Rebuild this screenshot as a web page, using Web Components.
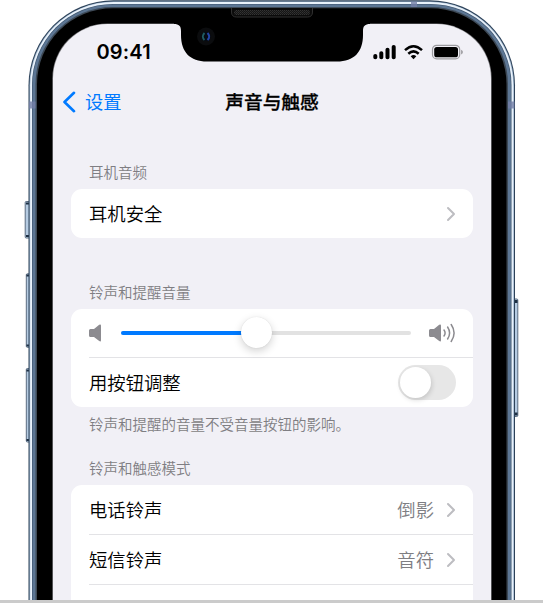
<!DOCTYPE html>
<html lang="zh-CN">
<head>
<meta charset="utf-8">
<title>声音与触感</title>
<style>
    body {
        margin: 0;
        width: 545px;
        height: 604px;
        overflow: hidden;
        background: #fff;
        font-family: "Liberation Sans", "Noto Sans CJK SC", sans-serif;
        font-weight: 350;
    }
</style>
</head>
<body>
<phone-frame>
    <status-bar>09:41</status-bar>
    <nav-bar>
        <span slot="back">设置</span>
        声音与触感
    </nav-bar>
    <settings-group style="margin-top: 40px">
        <span slot="header">耳机音频</span>
        <settings-row chevron>耳机安全</settings-row>
    </settings-group>
    <settings-group style="margin-top: 45px">
        <span slot="header">铃声和提醒音量</span>
        <volume-slider value="46.7"></volume-slider>
        <settings-row>用按钮调整<toggle-switch slot="value"></toggle-switch></settings-row>
        <span slot="footer">铃声和提醒的音量不受音量按钮的影响。</span>
    </settings-group>
    <settings-group style="margin-top: 24px">
        <span slot="header">铃声和触感模式</span>
        <settings-row chevron>电话铃声<span slot="value">倒影</span></settings-row>
        <settings-row chevron>短信铃声<span slot="value">音符</span></settings-row>
        <settings-row></settings-row>
    </settings-group>
</phone-frame>

<script>
class PhoneFrame extends HTMLElement {
    constructor() {
        super()
        this.attachShadow({ mode: "open" })
        this.shadowRoot.innerHTML = /*html*/ `
            <style>
                :host {
                    display: block;
                    position: relative;
                    box-sizing: border-box;
                    width: 543px;
                    height: 603px;
                    padding: 24px 52px 0 53px;
                    border-bottom: 3px solid #cbcbcb;
                    overflow: hidden;
                }

                #body {
                    position: absolute;
                    left: 0;
                    top: 0;
                }

                #screen {
                    position: relative;
                    display: flex;
                    flex-direction: column;
                    width: 438px;
                    height: 576px;
                    overflow: hidden;
                }
            </style>

            <svg id="body" width="543" height="600" viewBox="0 0 543 600">
                <defs>
                    <pattern id="mesh" width="2" height="2" patternUnits="userSpaceOnUse">
                        <rect width="2" height="2" fill="#151515"/>
                        <rect width="1" height="1" fill="#343434"/>
                        <rect x="1" y="1" width="1" height="1" fill="#2b2b2b"/>
                    </pattern>
                </defs>

                <!-- side keys -->
                <g fill="#b5cbe2" stroke="#5b6c80" stroke-width="1">
                    <rect x="25.200" y="201.500" width="5" height="36.500" rx="1"/>
                    <rect x="26.300" y="273.800" width="4" height="73.500" rx="1"/>
                    <rect x="26.300" y="368.500" width="4" height="73.500" rx="1"/>
                    <rect x="513.500" y="299" width="4.300" height="117.500" rx="1"/>
                </g>
                <path fill="#1d2f43" d="M26 202.500h3v2h-3zM26 235h3v2h-3zM26.500 274.500h2.500v2h-2.500zM26.500 344.500h2.500v2h-2.500zM26.500 369.500h2.500v2h-2.500zM26.500 439h2.500v2h-2.500zM515 300h2.500v3h-2.500zM515 412.500h2.500v3h-2.500z"/>

                <!-- metal band, from the outer edge inwards -->
                <rect x="28.500" y=".3" width="486.500" height="700" rx="85" fill="#2d4259"/>
                <rect x="29.500" y="1.500" width="484.500" height="700" rx="84" fill="#9db4cc"/>
                <rect x="30.200" y="2" width="483.100" height="700" rx="83.500" fill="#e9f2fb"/>
                <rect x="32" y="3.900" width="479.500" height="700" rx="81" fill="#3f556e"/>
                <rect x="32.600" y="4.500" width="478.300" height="700" rx="80.500" fill="#5c7694"/>
                <rect x="35.500" y="7" width="472.500" height="700" rx="77" fill="#3e4a57"/>
                <rect x="37" y="8.300" width="469.500" height="700" rx="76" fill="#000"/>
                <path d="M29 101.500h6.500v7h-6.500zM508 101.500h6.500v7h-6.500zM411 1.500h6v5.500h-6z" fill="#747fa8" opacity=".8"/>

                <!-- screen -->
                <rect x="52.300" y="23.500" width="439.400" height="700" rx="55" fill="#76767a"/>
                <rect x="53" y="24" width="438" height="700" rx="54.500" fill="#f1f0f6"/>

                <!-- notch -->
                <path d="M174 22V24C179 24 181 26 181 31V35C181 52 190 61.500 207 61.500H337C354 61.500 363 52 363 35V31C363 26 365 24 370 24V22Z"/>
                <path d="M231.500 8V12Q231.500 17 236.500 17H307.500Q312.500 17 312.500 12V8" fill="#0b0b0b" stroke="#303030"/>
                <rect x="234" y="10" width="76" height="5" rx="2.500" fill="url(#mesh)"/>
                <circle cx="206" cy="36.500" r="9" fill="#0b0c0e"/>
                <circle cx="206" cy="36.500" r="4.500" fill="#050a13"/>
                <path d="M204.500 33Q201 36.500 204.500 40" fill="none" stroke="#205d62" stroke-width="1.800"/>
                <path d="M207.500 33Q211 36.500 207.500 40" fill="none" stroke="#2445a5" stroke-width="2"/>
            </svg>
            <div id="screen"><slot></slot></div>
        `
    }
}

class StatusBar extends HTMLElement {
    constructor() {
        super()
        this.attachShadow({ mode: "open" })
        this.shadowRoot.innerHTML = /*html*/ `
            <style>
                :host {
                    display: flex;
                    justify-content: space-between;
                    align-items: center;
                    height: 38px;
                    padding: 9px 27px 0 43.500px;
                    font: 600 20px/38px Inter, sans-serif;
                    letter-spacing: .15px;
                }

                svg {
                    display: block;
                }
            </style>
            <span><slot></slot></span>
            <svg width="92" height="20" viewBox="372 42 92 20">
                <path d="M373.300 55.800q0-1.800 2-1.800t2 1.800v1.700q0 1.800-2 1.800t-2-1.800zM379.300 53q0-1.800 2-1.800t2 1.800v4.500q0 1.800-2 1.800t-2-1.800zM385.500 49.600q0-1.800 2-1.800t2 1.800v7.900q0 1.800-2 1.800t-2-1.800zM391.700 46.700q0-1.800 2-1.800t2 1.800v10.800q0 1.800-2 1.800t-2-1.800z"/>
                <g fill="none" stroke="#000" stroke-width="2.500">
                    <path d="M405 50.200Q413.500 42.400 422 50.200"/>
                    <path d="M408.300 53.700Q413.500 49.100 418.700 53.700"/>
                </g>
                <path d="M410.700 56.200Q413.500 53.900 416.300 56.200L413.500 59.200Z"/>
                <rect x="432.500" y="45.300" width="27.200" height="13.600" rx="4.200" fill="none" stroke="#9c9b9f" stroke-width="1.200"/>
                <rect x="434.200" y="47" width="23.800" height="10.300" rx="2.600"/>
                <path d="M461 49.800Q463 50.400 463 52.100T461 54.400Z" fill="#a5a4a8"/>
            </svg>
        `
    }
}

class NavBar extends HTMLElement {
    constructor() {
        super()
        this.attachShadow({ mode: "open" })
        this.shadowRoot.innerHTML = /*html*/ `
            <style>
                :host {
                    display: grid;
                    grid-template-columns: 1fr auto 1fr;
                    align-items: center;
                    height: 40px;
                    margin-top: 12px;
                    padding: 0 9px;
                    font-size: 18.700px;
                    font-weight: 500;
                    line-height: 40px;
                }

                #title {
                    -webkit-text-stroke: .3px currentColor;
                }

                #back {
                    display: flex;
                    align-items: center;
                    gap: 8px;
                    color: #007aff;
                    font-size: 18.300px;
                    font-weight: 400;
                }

                svg {
                    margin-top: -2px;
                }
            </style>
            <div id="back">
                <svg width="15" height="22" viewBox="0 0 15 22" fill="none" stroke="currentColor" stroke-width="2.600" stroke-linecap="round" stroke-linejoin="round">
                    <path d="M12 1.800L2.500 11L12 20.200"/>
                </svg>
                <slot name="back"></slot>
            </div>
            <div id="title"><slot></slot></div>
        `
    }
}

class SettingsGroup extends HTMLElement {
    constructor() {
        super()
        this.attachShadow({ mode: "open" })
        this.shadowRoot.innerHTML = /*html*/ `
            <style>
                :host {
                    display: block;
                    flex: none;
                    padding: 0 18px;
                }

                #header,
                #footer {
                    padding: 0 18px;
                    color: #7f7e83;
                    font-size: 14.500px;
                    line-height: 20px;
                    white-space: nowrap;
                }

                #header {
                    padding-bottom: 6px;
                }

                #footer {
                    padding-top: 8px;
                }

                #footer[hidden] {
                    display: none;
                }

                #card {
                    border-radius: 11px;
                    background: #fff;
                    overflow: hidden;
                }
            </style>
            <div id="header"><slot name="header"></slot></div>
            <div id="card"><slot id="rows"></slot></div>
            <div id="footer" hidden><slot name="footer"></slot></div>
        `

        // every row but the first has a line above it
        const rows = this.shadowRoot.getElementById("rows")
        rows.addEventListener("slotchange", () => {
            rows.assignedElements().forEach((row, i) => row.toggleAttribute("divided", i > 0))
        })

        const footer = this.shadowRoot.querySelector("slot[name=footer]")
        footer.addEventListener("slotchange", () => {
            footer.parentElement.hidden = footer.assignedElements().length === 0
        })
    }
}

class SettingsRow extends HTMLElement {
    constructor() {
        super()
        this.attachShadow({ mode: "open" })
        this.shadowRoot.innerHTML = /*html*/ `
            <style>
                :host {
                    display: block;
                    height: 49px;
                    padding-left: 18px;
                    font-size: 18.350px;
                    line-height: 26px;
                }

                :host([divided]) {
                    height: 50px;
                }

                #line {
                    display: flex;
                    align-items: center;
                    box-sizing: border-box;
                    height: 100%;
                    padding-right: 17px;
                }

                :host([divided]) #line {
                    border-top: 1px solid #e3e3e6;
                }

                #label {
                    flex: 1;
                    padding-top: 2px;
                }

                #value {
                    display: flex;
                    color: #7e7e83;
                }

                :host([chevron]) #value {
                    padding-top: 2px;
                }

                svg {
                    display: none;
                    margin-left: 12px;
                }

                :host([chevron]) svg {
                    display: block;
                }
            </style>
            <div id="line">
                <span id="label"><slot></slot></span>
                <span id="value"><slot name="value"></slot></span>
                <svg width="10" height="16" viewBox="0 0 10 16" fill="none" stroke="#bdbdc1" stroke-width="2" stroke-linecap="round" stroke-linejoin="round">
                    <path d="M2 2L8 8L2 14"/>
                </svg>
            </div>
        `
    }
}

class VolumeSlider extends HTMLElement {
    static observedAttributes = ["value"]

    constructor() {
        super()
        this.attachShadow({ mode: "open" })
        this.shadowRoot.innerHTML = /*html*/ `
            <style>
                :host {
                    display: flex;
                    align-items: center;
                    height: 48px;
                    padding: 0 17px 0 18px;
                }

                svg {
                    flex: none;
                    display: block;
                }

                #track {
                    display: flex;
                    align-items: center;
                    flex: 1;
                    height: 4.500px;
                    margin: 0 18px 0 19px;
                    border-radius: 3px;
                    background: #e2e2e2;
                }

                #fill {
                    width: var(--value);
                    height: 100%;
                    border-radius: 3px;
                    background: #007aff;
                }

                #thumb {
                    flex: none;
                    width: 31px;
                    height: 31px;
                    margin: -2px -15.500px 0;
                    border-radius: 50%;
                    background: #fff;
                    box-shadow: 0 3px 8px rgba(0, 0, 0, .18), 0 0 1px rgba(0, 0, 0, .15);
                }
            </style>
            <svg width="13" height="18" viewBox="0 0 13 18" fill="#8c8b90">
                <path d="M1.500 5H5L10.200 .8Q12 -.2 12 1.800V16.200Q12 18.200 10.200 17L5 13H1.500Q0 13 0 11.500V6.500Q0 5 1.500 5Z"/>
            </svg>
            <div id="track">
                <div id="fill"></div>
                <div id="thumb"></div>
            </div>
            <svg width="27" height="20" viewBox="0 0 27 20" fill="#8c8b90">
                <path d="M1.500 6H5L10.200 1.800Q12 .8 12 2.800V17.200Q12 19.200 10.200 18L5 14H1.500Q0 14 0 12.500V7.500Q0 6 1.500 6Z"/>
                <g fill="none" stroke="#8c8b90" stroke-width="1.500" stroke-linecap="round">
                    <path d="M15 7Q17.200 10 15 13"/>
                    <path d="M18.600 4Q22.600 10 18.600 16"/>
                    <path d="M22.200 1.500Q28 10 22.200 18.500"/>
                </g>
            </svg>
        `
    }

    attributeChangedCallback(name, oldValue, value) {
        this.shadowRoot.getElementById("track").style.setProperty("--value", `${value}%`)
    }
}

class ToggleSwitch extends HTMLElement {
    constructor() {
        super()
        this.attachShadow({ mode: "open" })
        this.shadowRoot.innerHTML = /*html*/ `
            <style>
                :host {
                    display: block;
                    box-sizing: border-box;
                    width: 58px;
                    height: 35px;
                    padding: 2px;
                    border-radius: 18px;
                    background: #e7e7e7;
                }

                div {
                    width: 31px;
                    height: 31px;
                    border-radius: 50%;
                    background: #fff;
                    box-shadow: 1px 2px 5px rgba(0, 0, 0, .15);
                }
            </style>
            <div></div>
        `
    }
}

customElements.define("phone-frame", PhoneFrame)
customElements.define("status-bar", StatusBar)
customElements.define("nav-bar", NavBar)
customElements.define("settings-group", SettingsGroup)
customElements.define("settings-row", SettingsRow)
customElements.define("volume-slider", VolumeSlider)
customElements.define("toggle-switch", ToggleSwitch)
</script>
</body>
</html>
